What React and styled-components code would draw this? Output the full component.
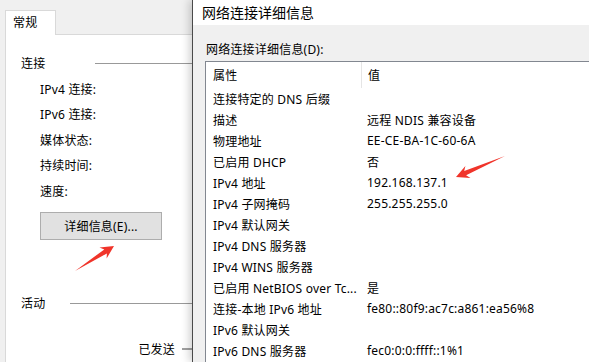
import React from "react";
import styled, { createGlobalStyle } from "styled-components";

const Global = createGlobalStyle`
  html, body { margin: 0; padding: 0; background: #f0f0f0; }
  body {
    font-family: "Noto Sans", "Noto Sans CJK SC", sans-serif;
    font-size: 12px;
    letter-spacing: 0.2px;
    color: #000;
    -webkit-font-smoothing: antialiased;
  }
  * { box-sizing: border-box; }
`;

const Screen = styled.div`
  position: relative;
  width: 589px;
  height: 362px;
  overflow: hidden;
  display: flex;
  background: #f0f0f0;
`;

/* ---------- left properties dialog ---------- */
const LeftDialog = styled.div`
  width: 192px;
  flex: none;
  padding: 10px 0 0 5px;
  display: flex;
  flex-direction: column;
  background: #f0f0f0;
`;

const TabStrip = styled.div`
  height: 24px;
  display: flex;
  position: relative;
  z-index: 1;
`;

const Tab = styled.div`
  width: 51px;
  height: 25px;
  background: #fff;
  border: 1px solid #d9d9d9;
  border-bottom: none;
  padding-left: 7px;
  display: flex;
  align-items: center;
  line-height: 1;
`;

const Page = styled.div`
  flex: 1;
  background: #fff;
  border-top: 1px solid #d9d9d9;
  border-left: 1px solid #d9d9d9;
  padding-top: 18px;
  display: flex;
  flex-direction: column;
`;

const Legend = styled.div`
  height: 20px;
  display: flex;
  align-items: center;
  padding-left: 15px;
  margin-top: ${(p) => p.$top || 0}px;
`;

const LegendText = styled.span`
  width: ${(p) => p.$w}px;
  flex: none;
`;

const Rule = styled.div`
  flex: 1;
  height: 1px;
  background: #999;
  margin-top: 1px;
`;

const FieldList = styled.div`
  margin-top: 3px;
  padding-left: 34px;
  display: flex;
  flex-direction: column;
`;

const Field = styled.div`
  height: 25.5px;
  display: flex;
  align-items: center;
`;

const DetailsButton = styled.div`
  margin: 8px 0 0 34px;
  width: 122px;
  height: 28px;
  background: #e1e1e1;
  border: 1px solid #adadad;
  display: flex;
  align-items: center;
  justify-content: center;
`;

const SentRow = styled.div`
  margin-top: 26px;
  height: 20px;
  display: flex;
  align-items: center;
  justify-content: flex-end;
`;

const SentRule = styled.div`
  width: 10px;
  height: 2px;
  background: #a0a0a0;
  margin-left: 7px;
  margin-top: 1px;
`;

/* ---------- right details window ---------- */
const DetailsWindow = styled.div`
  flex: 1;
  display: flex;
  flex-direction: column;
  border-left: 1px solid #4a4a4a;
  box-shadow: -3px 0 8px rgba(0, 0, 0, 0.18);
  position: relative;
  z-index: 2;
  background: #f0f0f0;
`;

const TitleBar = styled.div`
  height: 25px;
  background: #fff;
  padding-left: 9px;
  display: flex;
  align-items: center;
  font-size: 14px;
  letter-spacing: 0;
  padding-bottom: 2px;
`;

const Body = styled.div`
  flex: 1;
  padding: 14px 0 0 12px;
  display: flex;
  flex-direction: column;
`;

const ListLabel = styled.div`
  height: 20px;
  display: flex;
  align-items: center;
  padding-left: 1px;
`;

const ListBox = styled.div`
  margin-top: 2px;
  flex: 1;
  background: #fff;
  border-top: 1px solid #828790;
  border-left: 1px solid #828790;
`;

const Row = styled.div`
  height: ${(p) => (p.$header ? 26 : 21)}px;
  display: grid;
  grid-template-columns: 156px 1fr;
  align-items: center;
  white-space: nowrap;
`;

const NameCell = styled.div`
  padding-left: 7px;
  height: 100%;
  display: flex;
  align-items: center;
  border-right: 1px solid ${(p) => (p.$header ? "#e5e5e5" : "transparent")};
  overflow: hidden;
`;

const ValueCell = styled.div`
  padding-left: ${(p) => (p.$header ? 6 : 5)}px;
`;

const Overlay = styled.svg`
  position: absolute;
  left: 0;
  top: 0;
  width: 589px;
  height: 362px;
  pointer-events: none;
  z-index: 5;
`;

const rows = [
  ["连接特定的 DNS 后缀", ""],
  ["描述", "远程 NDIS 兼容设备"],
  ["物理地址", "EE-CE-BA-1C-60-6A"],
  ["已启用 DHCP", "否"],
  ["IPv4 地址", "192.168.137.1"],
  ["IPv4 子网掩码", "255.255.255.0"],
  ["IPv4 默认网关", ""],
  ["IPv4 DNS 服务器", ""],
  ["IPv4 WINS 服务器", ""],
  ["已启用 NetBIOS over Tc...", "是"],
  ["连接-本地 IPv6 地址", "fe80::80f9:ac7c:a861:ea56%8"],
  ["IPv6 默认网关", ""],
  ["IPv6 DNS 服务器", "fec0:0:0:ffff::1%1"],
];

function arrowPoints(tx, ty, hx, hy) {
  const dx = hx - tx;
  const dy = hy - ty;
  const L = Math.hypot(dx, dy);
  const ux = dx / L;
  const uy = dy / L;
  const nx = -uy;
  const ny = ux;
  const headLen = 13;
  const headHalf = 6.5;
  const neckHalf = 2.4;
  const bx = hx - ux * headLen;
  const by = hy - uy * headLen;
  const sx = hx - ux * (headLen - 3);
  const sy = hy - uy * (headLen - 3);
  const pts = [
    [tx, ty],
    [sx + nx * neckHalf, sy + ny * neckHalf],
    [bx + nx * headHalf, by + ny * headHalf],
    [hx, hy],
    [bx - nx * headHalf, by - ny * headHalf],
    [sx - nx * neckHalf, sy - ny * neckHalf],
  ];
  return pts.map((p) => p.map((v) => v.toFixed(1)).join(",")).join(" ");
}

export default function App() {
  return (
    <>
      <Global />
      <Screen>
        <LeftDialog>
          <TabStrip>
            <Tab>常规</Tab>
          </TabStrip>
          <Page>
            <Legend>
              <LegendText $w={74}>连接</LegendText>
              <Rule />
            </Legend>
            <FieldList>
              <Field>IPv4 连接:</Field>
              <Field>IPv6 连接:</Field>
              <Field>媒体状态:</Field>
              <Field>持续时间:</Field>
              <Field>速度:</Field>
            </FieldList>
            <DetailsButton>详细信息(E)...</DetailsButton>
            <Legend $top={53}>
              <LegendText $w={49}>活动</LegendText>
              <Rule />
            </Legend>
            <SentRow>
              <span>已发送</span>
              <SentRule />
            </SentRow>
          </Page>
        </LeftDialog>
        <DetailsWindow>
          <TitleBar>网络连接详细信息</TitleBar>
          <Body>
            <ListLabel>网络连接详细信息(D):</ListLabel>
            <ListBox>
              <Row $header>
                <NameCell $header>属性</NameCell>
                <ValueCell $header>值</ValueCell>
              </Row>
              {rows.map(([k, v]) => (
                <Row key={k}>
                  <NameCell>{k}</NameCell>
                  <ValueCell>{v}</ValueCell>
                </Row>
              ))}
            </ListBox>
          </Body>
        </DetailsWindow>
        <Overlay viewBox="0 0 589 362">
          <polygon points={arrowPoints(75, 271, 114, 246)} fill="#f0342a" />
          <polygon points={arrowPoints(505, 156, 456, 177)} fill="#f0342a" />
        </Overlay>
      </Screen>
    </>
  );
}
